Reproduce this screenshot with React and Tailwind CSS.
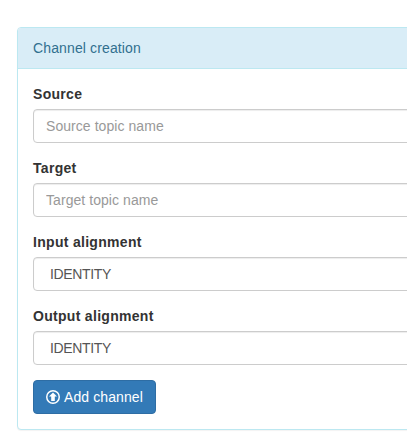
export default function App() {
  return (
    <div className="w-[407px] h-[440px] overflow-hidden bg-white pl-[17px] pt-[27px] font-['Liberation_Sans',Arial,sans-serif] text-[14px] leading-[20px] text-[#333]">
      <div className="w-[640px] rounded border border-[#bce8f1] bg-white shadow-[0_1px_1px_rgba(0,0,0,0.05)]">
        <div className="rounded-t-[3px] border-b border-[#bce8f1] bg-[#d9edf7] px-[15px] py-[10px] tracking-[0.13px] text-[#31708f]">
          Channel creation
        </div>
        <form className="flex flex-col gap-[15px] p-[15px]">
          <div className="flex flex-col gap-[5px]">
            <label className="font-bold tracking-[0.3px]">Source</label>
            <input placeholder="Source topic name" className="h-[34px] w-full rounded border border-[#ccc] bg-white px-[12px] py-[6px] tracking-[0.06px] text-[#555] shadow-[inset_0_1px_1px_rgba(0,0,0,0.075)] outline-none placeholder:text-[#999]" />
          </div>
          <div className="flex flex-col gap-[5px]">
            <label className="font-bold tracking-[0.3px]">Target</label>
            <input placeholder="Target topic name" className="h-[34px] w-full rounded border border-[#ccc] bg-white px-[12px] py-[6px] tracking-[0.06px] text-[#555] shadow-[inset_0_1px_1px_rgba(0,0,0,0.075)] outline-none placeholder:text-[#999]" />
          </div>
          <div className="flex flex-col gap-[5px]">
            <label className="font-bold tracking-[0.3px]">Input alignment</label>
            <select className="h-[34px] w-full appearance-none rounded border border-[#ccc] bg-white pl-[16px] pr-[12px] tracking-[-0.35px] text-[#555] shadow-[inset_0_1px_1px_rgba(0,0,0,0.075)] outline-none">
              <option>IDENTITY</option>
            </select>
          </div>
          <div className="flex flex-col gap-[5px]">
            <label className="font-bold tracking-[0.3px]">Output alignment</label>
            <select className="h-[34px] w-full appearance-none rounded border border-[#ccc] bg-white pl-[16px] pr-[12px] tracking-[-0.35px] text-[#555] shadow-[inset_0_1px_1px_rgba(0,0,0,0.075)] outline-none">
              <option>IDENTITY</option>
            </select>
          </div>
          <div className="flex">
            <button type="button" className="flex h-[34px] items-center gap-[4px] rounded border border-[#2e6da4] bg-[#337ab7] px-[12px] tracking-[0.1px] text-white">
              <svg width="14" height="14" viewBox="0 0 14 14" className="shrink-0" aria-hidden="true">
                <path fill="white" fillRule="evenodd" d="M7 0a7 7 0 1 1 0 14A7 7 0 0 1 7 0Zm0 1.5a5.5 5.5 0 1 0 0 11 5.5 5.5 0 0 0 0-11Zm0 1 4 4.1H8.8V11H5.2V6.6H3Z" />
              </svg>
              Add channel
            </button>
          </div>
        </form>
      </div>
    </div>
  );
}
